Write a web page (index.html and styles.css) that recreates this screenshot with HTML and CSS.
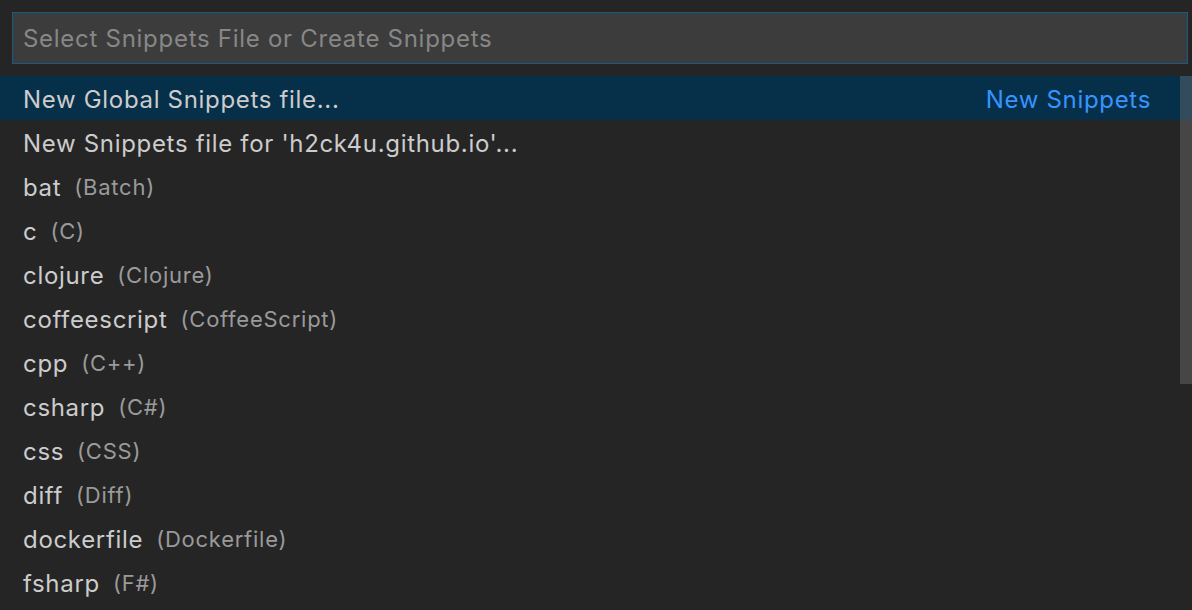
FILE: index.html
```html
<!DOCTYPE html>
<html>
<head>
<meta charset="utf-8">
<link rel="stylesheet" href="styles.css">
</head>
<body>
<div class="quick-input">
  <div class="input-wrap">
    <input class="input" type="text" placeholder="Select Snippets File or Create Snippets">
  </div>
  <div class="list">
    <div class="rows">
      <div class="row selected"><span class="label">New Global Snippets file...</span><span class="tag">New Snippets</span></div>
      <div class="row"><span class="label">New Snippets file for 'h2ck4u.github.io'...</span></div>
      <div class="row"><span class="label">bat</span><span class="desc">(Batch)</span></div>
      <div class="row"><span class="label">c</span><span class="desc">(C)</span></div>
      <div class="row"><span class="label">clojure</span><span class="desc">(Clojure)</span></div>
      <div class="row"><span class="label">coffeescript</span><span class="desc">(CoffeeScript)</span></div>
      <div class="row"><span class="label">cpp</span><span class="desc">(C++)</span></div>
      <div class="row"><span class="label">csharp</span><span class="desc">(C#)</span></div>
      <div class="row"><span class="label">css</span><span class="desc">(CSS)</span></div>
      <div class="row"><span class="label">diff</span><span class="desc">(Diff)</span></div>
      <div class="row"><span class="label">dockerfile</span><span class="desc">(Dockerfile)</span></div>
      <div class="row"><span class="label">fsharp</span><span class="desc">(F#)</span></div>
    </div>
    <div class="scrollbar"><div class="thumb"></div></div>
  </div>
</div>
</body>
</html>
```
FILE: styles.css
```css
html, body {
  margin: 0;
  padding: 0;
  background: #252526;
  width: 1192px;
  height: 610px;
  overflow: hidden;
  font-family: "Inter", "Noto Sans", sans-serif;
}
.quick-input {
  display: flex;
  flex-direction: column;
}
.input-wrap {
  padding: 12px 4px 12px 12px;
}
.input {
  box-sizing: border-box;
  width: 1176px;
  height: 52px;
  background: #3c3c3c;
  border: 1px solid #1c5a86;
  outline: none;
  padding: 1px 10px 0;
  font-family: inherit;
  font-size: 24px;
  letter-spacing: 0.72px;
  color: #cccccc;
}
.input::placeholder {
  color: #878787;
}
.list {
  display: flex;
  position: relative;
}
.rows {
  flex: 1;
  display: flex;
  flex-direction: column;
}
.row {
  box-sizing: border-box;
  height: 44px;
  display: flex;
  align-items: center;
  padding: 2px 40px 0 23px;
  font-size: 24px;
  letter-spacing: 0.68px;
  color: #cccccc;
}
.row.selected {
  background: #062f4a;
  margin-right: -12px;
  padding-right: 41px;
}
.label {
  white-space: pre;
}
.desc {
  margin-left: 13px;
  font-size: 22px;
  letter-spacing: 0.75px;
  color: #9a9a9a;
}
.tag {
  margin-left: auto;
  color: #3794ff;
}
.scrollbar {
  width: 12px;
  position: relative;
  z-index: 1;
}
.thumb {
  height: 308px;
  background: rgba(121,121,121,0.4);
}
```
